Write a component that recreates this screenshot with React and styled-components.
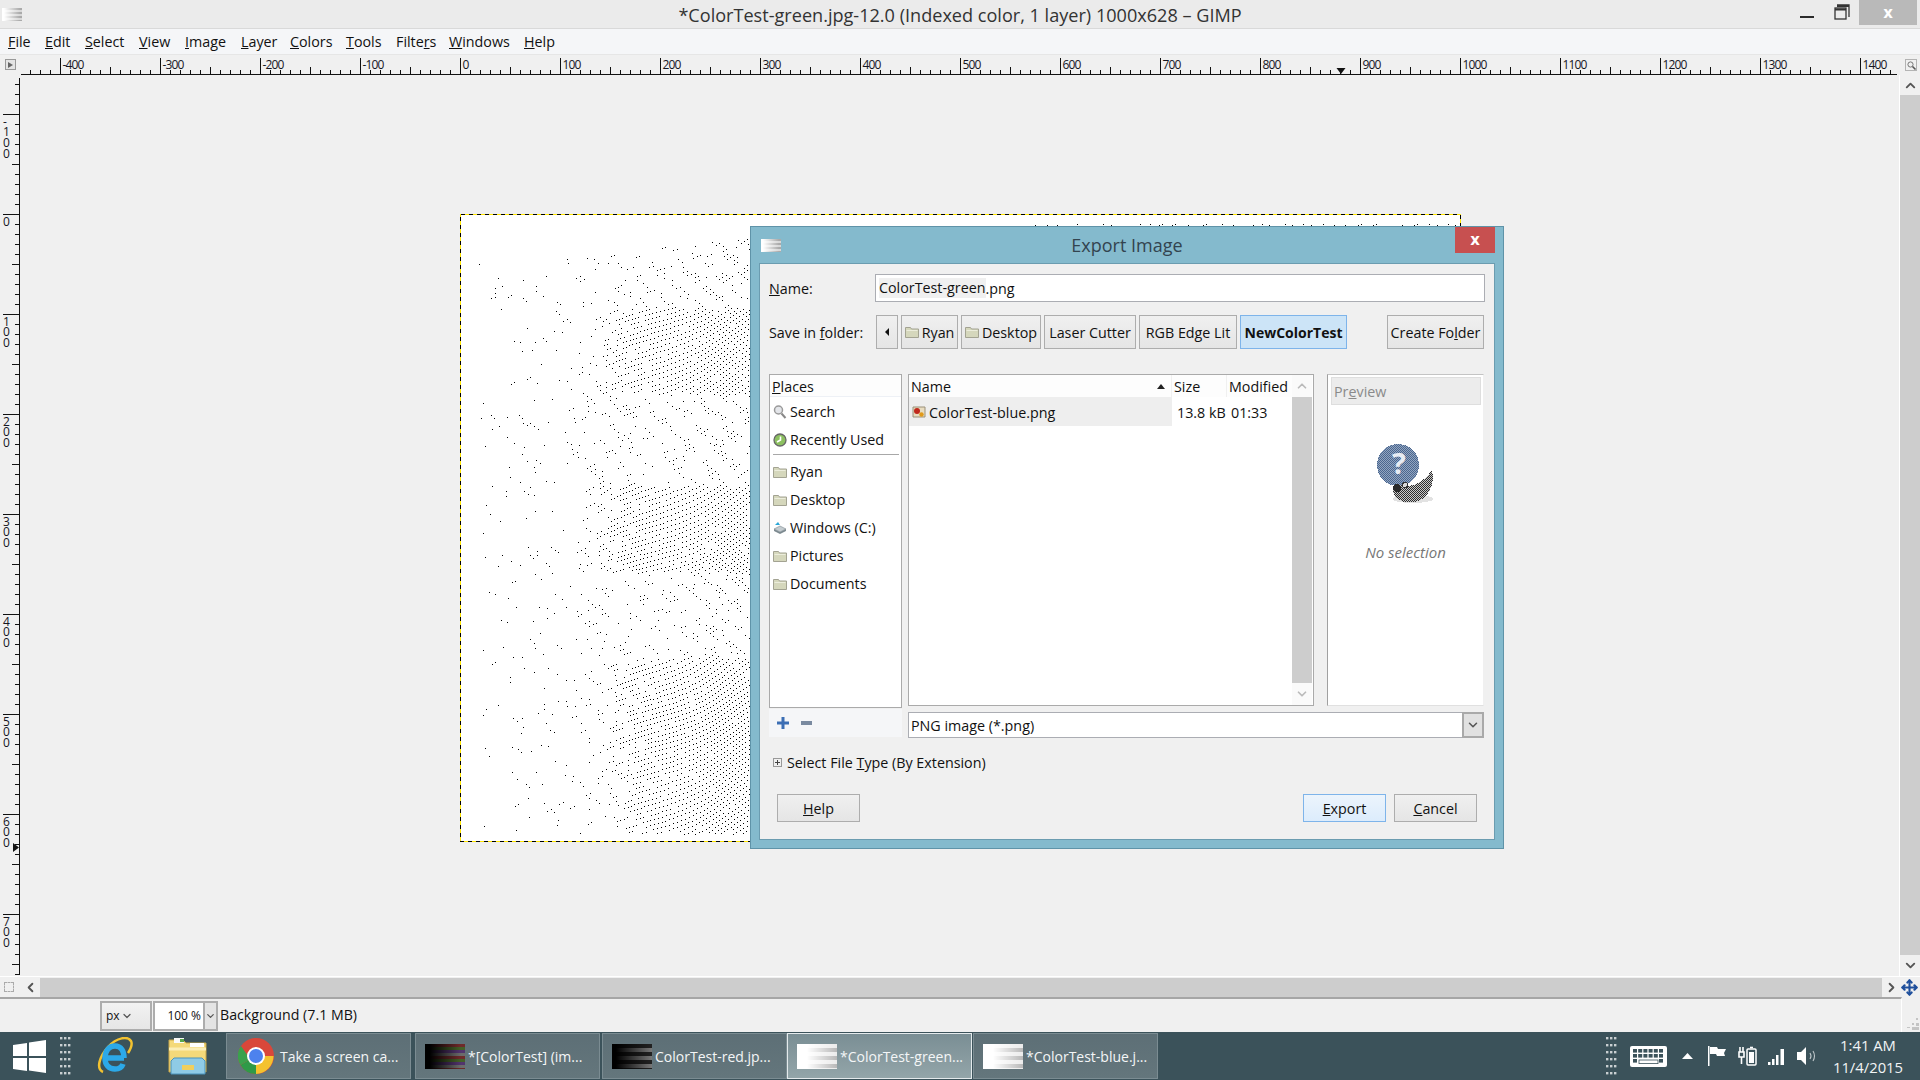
import React, {useMemo} from "react";
import styled, {createGlobalStyle} from "styled-components";
import {ChevronUp, ChevronDown, ChevronLeft, ChevronRight, Move} from "lucide-react";

const uiFont = `"Open Sans", "Noto Sans", sans-serif`;

const GlobalStyle = createGlobalStyle`
  html, body {
    margin: 0;
    padding: 0;
    background: #f0f0f0;
  }
  * {
    box-sizing: border-box;
  }
`;

const Screen = styled.div`
  position: relative;
  width: 1920px;
  height: 1080px;
  overflow: hidden;
  display: flex;
  flex-direction: column;
  font-family: ${uiFont};
  font-size: 14.3px;
  color: #111;
  background: #f0f0f0;
`;

/* window chrome */
const TitleBar = styled.div`
  position: relative;
  flex: none;
  height: 29px;
  display: flex;
  align-items: center;
  justify-content: center;
  background: #ebebeb;
  border-bottom: 1px solid #d9d9d9;
`;

const TitleText = styled.div`
  font-size: 18.1px;
  color: #333;
  padding-top: 1px;
`;

const BlurIcon = styled.div`
  position: absolute;
  left: ${p => p.$left}px;
  top: ${p => p.$top}px;
  width: 20px;
  height: 13px;
  background:
    linear-gradient(90deg, #ffffff 10%, rgba(255,255,255,0) 90%),
    repeating-linear-gradient(180deg, #aaa 0 2px, #d8d8d8 2px 4px);
`;

const WindowControls = styled.div`
  position: absolute;
  right: 3px;
  top: 0;
  display: flex;
  align-items: flex-start;
`;

const MinimizeGlyph = styled.div`
  width: 14px;
  height: 2px;
  margin-top: 16px;
  margin-right: 20px;
  background: #2b2b2b;
`;

const RestoreGlyph = styled.svg`
  width: 16px;
  height: 16px;
  margin-top: 4px;
  margin-right: 9px;
`;

const CloseBox = styled.div`
  width: ${p => p.$w}px;
  height: ${p => p.$h}px;
  background: ${p => p.$bg};
  display: flex;
  align-items: center;
  justify-content: center;
  color: #fff;
  font-family: "DejaVu Sans", sans-serif;
  font-weight: 700;
  font-size: 15px;
`;

const MenuBar = styled.div`
  flex: none;
  height: 26px;
  display: flex;
  align-items: center;
  padding-left: 8px;
  background: #f5f6f8;
  border-bottom: 1px solid #e6e6e6;
`;

const MenuItem = styled.span`
  width: ${p => p.$w}px;
  flex: none;
`;

const RulerRow = styled.div`
  flex: none;
  height: 20px;
  display: flex;
  align-items: flex-start;
`;

const RulerCorner = styled.div`
  width: 21px;
  height: 20px;
  flex: none;
  padding: 4px 0 0 5px;
`;

const SmallSquare = styled.div`
  width: 11px;
  height: 11px;
  border: 1px solid #999;
  background: #e4e4e4;
  display: flex;
  align-items: center;
  justify-content: center;
  &::after {
    content: "";
    border-left: 5px solid #666;
    border-top: 3px solid transparent;
    border-bottom: 3px solid transparent;
  }
`;

const ZoomCorner = styled.svg`
  width: 12px;
  height: 12px;
  margin: 4px 0 0 6px;
  flex: none;
`;

const Middle = styled.div`
  flex: none;
  height: 901px;
  display: flex;
`;

const Canvas = styled.div`
  flex: 1;
  padding: 139px 0 0 439px;
  overflow: hidden;
`;

const ImageFrame = styled.div`
  position: relative;
  width: 1001px;
  height: 628px;
  background: #fff;
`;

const MarchingAnts = styled.svg`
  position: absolute;
  left: 0;
  top: 0;
`;

const VScroll = styled.div`
  width: 21px;
  flex: none;
  display: flex;
  flex-direction: column;
  align-items: center;
  border-left: 1px solid #fff;
  color: #555;
`;

const ArrowCell = styled.div`
  height: ${p => p.$h}px;
  width: ${p => p.$w || 20}px;
  flex: none;
  display: flex;
  align-items: center;
  justify-content: center;
  color: ${p => p.$c || "#555"};
`;

const VThumb = styled.div`
  width: 20px;
  height: 860px;
  flex: none;
  background: #cdcdcd;
`;

const HScrollRow = styled.div`
  flex: none;
  height: 21px;
  display: flex;
  align-items: center;
  border-top: 1px solid #fff;
`;

const DashedSquare = styled.div`
  width: 10px;
  height: 10px;
  margin: 0 6px 0 4px;
  flex: none;
  border: 1px dashed #aaa;
`;

const HThumb = styled.div`
  width: 1842px;
  height: 19px;
  flex: none;
  margin-left: 0;
  background: #cdcdcd;
`;

/* status bar */
const StatusBar = styled.div`
  flex: none;
  height: 35px;
  display: flex;
  align-items: center;
  padding-left: 100px;
  border-top: 2px solid #a6a6a6;
  width: 1902px;
  border-right: 1px solid #fff;
  box-sizing: border-box;
`;

const UnitCombo = styled.div`
  width: 52px;
  height: 30px;
  flex: none;
  display: flex;
  align-items: center;
  padding-left: 4px;
  gap: 1px;
  font-size: 12px;
  border: 2px solid #adadad;
  background: linear-gradient(#f2f2f2, #e6e6e6);
`;

const ZoomInput = styled.div`
  width: 50px;
  height: 30px;
  flex: none;
  margin-left: 1px;
  padding-right: 2px;
  display: flex;
  align-items: center;
  justify-content: flex-end;
  font-size: 12px;
  background: #fff;
  border: 2px solid #adadad;
  border-right: none;
`;

const ZoomDrop = styled.div`
  width: 15px;
  height: 30px;
  flex: none;
  display: flex;
  align-items: center;
  justify-content: center;
  background: #e4e4e4;
  border: 2px solid #adadad;
`;

const StatusText = styled.span`
  margin: -2px 0 0 2px;
  font-size: 14.2px;
`;

const ResizeGrip = styled.svg`
  position: absolute;
  right: 0;
  top: 1018px;
`;

/* taskbar */
const Taskbar = styled.div`
  flex: none;
  height: 48px;
  display: flex;
  align-items: center;
  background: #3b525a;
`;

const BarIcon = styled.svg`
  flex: none;
  margin-left: ${p => p.$ml}px;
`;

const TaskButton = styled.div`
  flex: none;
  width: ${p => p.$w || 185}px;
  height: 46px;
  margin-left: ${p => p.$ml}px;
  display: flex;
  align-items: center;
  color: #f4f6f7;
  font-size: 14px;
  white-space: nowrap;
  border: 1px solid ${p => p.$active ? "#e4eaec" : "#7b8c92"};
  background: ${p => p.$active
    ? "linear-gradient(180deg, #7a8e94, #93a5a9)"
    : "linear-gradient(180deg, #5d6f76, #64767c)"};
`;

const Thumb = styled.div`
  width: 40px;
  height: 25px;
  flex: none;
  margin: 0 3px 0 9px;
  background: ${p => p.$kind === "dark"
    ? "linear-gradient(90deg, #000 0 12%, rgba(0,0,0,.1) 90%), repeating-linear-gradient(180deg, #7b2f2f 0 3px, #4c6b2c 3px 6px, #5b3a7a 6px 9px, #777 9px 12px)"
    : p.$kind === "grey"
      ? "linear-gradient(90deg, #000 0 10%, rgba(0,0,0,0) 100%), repeating-linear-gradient(180deg, #222 0 4px, #777 4px 8px)"
      : "linear-gradient(90deg, #fff 0 25%, rgba(255,255,255,.1) 100%), repeating-linear-gradient(180deg, #e9e9e9 0 4px, #b0b0b0 4px 8px)"};
`;

const Tray = styled.div`
  margin-left: auto;
  display: flex;
  align-items: center;
`;

const Clock = styled.div`
  width: 76px;
  margin: 0 14px 0 13px;
  text-align: center;
  color: #f2f5f6;
  font-size: 14.8px;
  line-height: 22px;
  white-space: nowrap;
`;

/* export dialog */
const Dialog = styled.div`
  position: absolute;
  left: 750px;
  top: 226px;
  width: 754px;
  height: 623px;
  display: flex;
  flex-direction: column;
  background: #84bacd;
  border: 1px solid #5f93a8;
`;

const DialogTitle = styled.div`
  position: relative;
  flex: none;
  height: 36px;
  display: flex;
  align-items: center;
  justify-content: center;
  font-size: 18px;
  color: #33444f;
`;

const DialogClose = styled.div`
  position: absolute;
  right: 8px;
  top: 0;
`;

const DialogBody = styled.div`
  flex: 1;
  margin: 0 8px 8px 8px;
  padding: 10px 10px 0 9px;
  display: flex;
  flex-direction: column;
  background: #f0f0f0;
  border: 1px solid #6b9cb0;
`;

const FormRow = styled.div`
  display: flex;
  align-items: center;
  flex: none;
  height: ${p => p.$h}px;
  margin-top: ${p => p.$mt || 0}px;
`;

const FieldLabel = styled.span`
  width: 106px;
  flex: none;
`;

const NameInput = styled.div`
  flex: 1;
  height: 28px;
  margin-right: -1px;
  display: flex;
  align-items: center;
  padding-left: 3px;
  background: #fff;
  border: 1px solid #abadb3;
`;

const Selected = styled.span`
  background: #f0f0f0;
  line-height: 20px;
`;

const PathButton = styled.div`
  height: 34px;
  flex: none;
  width: ${p => p.$w}px;
  margin-left: ${p => p.$ml || 0}px;
  display: flex;
  align-items: center;
  justify-content: center;
  gap: 3px;
  white-space: nowrap;
  font-size: ${p => p.$on ? 14 : 14.3}px;
  font-weight: ${p => p.$on ? 700 : 400};
  border: 1px solid ${p => p.$on ? "#7eb4ea" : "#adadad"};
  background: ${p => p.$on ? "#cce4f7" : "linear-gradient(#f0f0f0, #e5e5e5)"};
`;

const BackArrow = styled.div`
  border-right: 4px solid #111;
  border-top: 4px solid transparent;
  border-bottom: 4px solid transparent;
`;

const Panels = styled.div`
  flex: none;
  margin-top: 25px;
  height: 364px;
  display: flex;
`;

const Column = styled.div`
  display: flex;
  flex-direction: column;
  flex: none;
  width: ${p => p.$w}px;
  margin-left: ${p => p.$ml || 0}px;
`;

const PlacesBox = styled.div`
  flex: none;
  height: 334px;
  background: #fff;
  border: 1px solid #aaa;
`;

const ListHeader = styled.div`
  height: 22px;
  display: flex;
  align-items: center;
  padding: 1px 0 0 2px;
  background: #fdfdfd;
  border-bottom: 1px solid #eef1f6;
`;

const PlaceRow = styled.div`
  height: 28px;
  display: flex;
  align-items: center;
  padding: 1px 0 0 3px;
  gap: 3px;
`;

const PlaceSeparator = styled.div`
  height: 1px;
  margin: 1px 2px 2px 3px;
  background: #a8a8a8;
`;

const PlaceTools = styled.div`
  flex: none;
  height: 28px;
  margin-top: 1px;
  display: flex;
  align-items: center;
  padding-left: 8px;
  gap: 12px;
  background: #f5f6f8;
`;

const FilesBox = styled.div`
  flex: none;
  height: 332px;
  display: flex;
  background: #fff;
  border: 1px solid #aaa;
`;

const FileList = styled.div`
  flex: 1;
  min-width: 0;
`;

const FileHeader = styled.div`
  height: 22px;
  display: grid;
  grid-template-columns: 263px 55px 1fr;
  align-items: center;
  background: #fdfdfd;
`;

const HeaderCell = styled.div`
  position: relative;
  padding: 1px 0 0 2px;
  height: 100%;
  display: flex;
  align-items: center;
  justify-content: space-between;
  border-right: ${p => p.$last ? "none" : "1px solid #f0f0f0"};
`;

const SortArrow = styled.div`
  margin-right: 6px;
  border-bottom: 5px solid #222;
  border-left: 4px solid transparent;
  border-right: 4px solid transparent;
`;

const FileRow = styled.div`
  height: 29px;
  padding-top: 0;
  display: grid;
  grid-template-columns: 263px 54px 1fr;
  align-items: center;
`;

const FileNameCell = styled.div`
  height: 100%;
  display: flex;
  align-items: center;
  gap: 3px;
  padding: 1px 0 0 3px;
  background: #eeeeee;
`;

const FileCell = styled.div`
  padding: 1px 0 0 ${p => p.$pad}px;
  white-space: nowrap;
`;

const ListScroll = styled.div`
  width: 20px;
  flex: none;
  display: flex;
  flex-direction: column;
  margin-right: 1px;
  background: #fafafa;
`;

const ListThumb = styled.div`
  flex: none;
  height: 286px;
  background: #cdcdcd;
`;

const FilterCombo = styled.div`
  flex: none;
  height: 26px;
  margin-top: 6px;
  width: 576px;
  display: flex;
  align-items: center;
  padding-left: 2px;
  background: #fff;
  border: 1px solid #abadb3;
`;

const FilterDrop = styled.div`
  margin-left: auto;
  width: 22px;
  height: 26px;
  flex: none;
  display: flex;
  align-items: center;
  justify-content: center;
  background: #e1e1e1;
  border: 2px solid #a9a9a9;
  margin-right: -1px;
`;

const PreviewBox = styled.div`
  height: 332px;
  display: flex;
  flex-direction: column;
  align-items: center;
  background: #fff;
  border-left: 1px solid #a0a0a0;
  border-top: 1px solid #c4c4c4;
  border-right: 1px solid #f0f0f0;
  border-bottom: 1px solid #e0e0e0;
`;

const PreviewHeader = styled.div`
  align-self: stretch;
  flex: none;
  height: 28px;
  margin: 2px 2px 0 3px;
  padding-left: 2px;
  display: flex;
  align-items: center;
  color: #8a8a8a;
  background: #ececec;
  border: 1px solid #dedede;
`;

const NoPreviewSvg = styled.svg`
  flex: none;
  margin: 39px 0 0 3px;
`;

const NoSelection = styled.div`
  margin-top: 38px;
  color: #777;
  font-style: italic;
  font-size: 15px;
`;

const ExpanderRow = styled.div`
  flex: none;
  display: flex;
  align-items: center;
  gap: 5px;
  height: 24px;
  margin: 12px 0 0 4px;
`;

const Expander = styled.div`
  width: 9px;
  height: 9px;
  border: 1px solid #999;
  position: relative;
  &::before {
    content: "";
    position: absolute;
    left: 1px;
    right: 1px;
    top: 3px;
    height: 1px;
    background: #444;
  }
  &::after {
    content: "";
    position: absolute;
    top: 1px;
    bottom: 1px;
    left: 3px;
    width: 1px;
    background: #444;
  }
`;

const ActionRow = styled.div`
  flex: none;
  display: flex;
  margin: 20px 7px 0 8px;
`;

const ActionButton = styled.div`
  width: 83px;
  height: 28px;
  display: flex;
  align-items: center;
  justify-content: center;
  flex: none;
  margin-left: ${p => p.$ml || 0}px;
  border: 1px solid ${p => p.$primary ? "#7eb4ea" : "#adadad"};
  background: ${p => p.$primary
    ? "linear-gradient(#ecf4fc, #dcecfc)"
    : "linear-gradient(#f0f0f0, #e5e5e5)"};
`;

const menu = [
    [<><u>F</u>ile</>, 37],
    [<><u>E</u>dit</>, 40],
    [<><u>S</u>elect</>, 54],
    [<><u>V</u>iew</>, 46],
    [<><u>I</u>mage</>, 56],
    [<><u>L</u>ayer</>, 49],
    [<><u>C</u>olors</>, 56],
    [<><u>T</u>ools</>, 50],
    [<>Filte<u>r</u>s</>, 53],
    [<><u>W</u>indows</>, 75],
    [<><u>H</u>elp</>, 40],
];

const hTicks = [];
for (let v = -440; v <= 1430; v += 10) hTicks.push(v);
const vTicks = [];
for (let v = -130; v <= 760; v += 10) vTicks.push(v);

const HRuler = () => (
    <svg width="1878" height="20" style={{display: "block", flex: "none"}}>
        <path d="M0 19.5H1876" stroke="#111" fill="none"/>
        {hTicks.map(v => {
            const x = 439.5 + v;
            const len = v % 100 === 0 ? 16 : v % 50 === 0 ? 7 : 4;
            return <path key={v} d={`M${x} 19V${19 - len}`} stroke="#111" fill="none"/>;
        })}
        {hTicks.filter(v => v % 100 === 0).map(v => (
            <text key={v} x={441.5 + v} y="13.5" fontFamily="Open Sans" fontSize="12" letterSpacing="-0.9" fill="#16161f">{v}</text>
        ))}
        <path d="M1315.5 13h9l-4.5 6z" fill="#111"/>
    </svg>
);

const VRuler = () => (
    <svg width="21" height="901" style={{display: "block", flex: "none"}}>
        <path d="M19.5 3V900" stroke="#111" fill="none"/>
        {vTicks.map(v => {
            const y = 139.5 + v;
            const len = v % 100 === 0 ? 16 : v % 50 === 0 ? 7 : 4;
            return <path key={v} d={`M19 ${y}H${19 - len}`} stroke="#111" fill="none"/>;
        })}
        {[-100, 0, 100, 200, 300, 400, 500, 600, 700].map(v => {
            const chars = String(v).split("");
            return (
                <text key={v} x={chars.map(() => 3).join(" ")}
                      y={chars.map((c, i) => 139.5 + v + 11 + i * 10.7).join(" ")}
                      fontFamily="Open Sans" fontSize="12" fill="#16161f">{v}</text>
            );
        })}
        <path d="M13 768v9l6-4.5z" fill="#111"/>
    </svg>
);

const interp = (pts, x) => {
    for (let i = 1; i < pts.length; i++) {
        if (x <= pts[i][0]) {
            const [x0, y0] = pts[i - 1];
            const [x1, y1] = pts[i];
            return y0 + (y1 - y0) * (x - x0) / (x1 - x0);
        }
    }
    return pts[pts.length - 1][1];
};

const smooth = (a, b, x) => {
    const t = Math.min(1, Math.max(0, (x - a) / (b - a)));
    return t * t * (3 - 2 * t);
};

// halftone picture: a warped lattice thinned out by a density map
const makeDots = () => {
    let seed = 1234;
    const rand = () => {
        seed = (seed * 16807) % 2147483647;
        return seed / 2147483647;
    };
    const top = [[0, 50], [50, 47], [147, 41], [210, 30], [280, 24], [595, 9], [1000, 8]];
    const bands = [[93, 179, 175], [270, 356, 165], [443, 618, 185]];
    let d = "";
    for (let i = -200; i < 300; i++) {
        for (let j = -300; j < 300; j++) {
            let x = i * 3.6 + j * 3.4;
            let y = i * 3.4 - j * 1.6;
            const wx = x, wy = y;
            x += 5 * Math.sin(wy / 37) + 2 * Math.sin(wx / 17);
            y += 5 * Math.sin(wx / 29) + 2 * Math.sin(wy / 23);
            x = Math.round(x);
            y = Math.round(y);
            if (x < 18 || x > 998 || y < 8 || y > 619) continue;
            if (y < interp(top, x)) continue;
            if (x > 300 && y > 13) continue;
            const t = Math.min(1, (x - 18) / 280);
            // sparse area reads as wavy diagonal chains
            const chain = Math.sin((x - y * 1.05 + 9 * Math.sin(y / 41)) / 4.5) > 0.1 ? 1 : 0.12;
            let p = (0.07 + 0.62 * Math.pow(t, 1.3)) * chain;
            if (x > 300) p = 0.85;
            for (const [y0, y1, x0] of bands) {
                const inside = smooth(y0 - 3, y0 + 3, y) * (1 - smooth(y1 - 3, y1 + 3, y));
                p += 0.85 * inside * smooth(x0 - 55, x0 + 30, x);
            }
            if (rand() < p) d += `M${x + 1} ${y + 1}h1v1h-1z`;
        }
    }
    return d;
};

const Halftone = () => {
    const d = useMemo(makeDots, []);
    return (
        <MarchingAnts width="1001" height="628" shapeRendering="crispEdges">
            <path d={d} fill="#000"/>
            <rect x="0.5" y="0.5" width="1000" height="627" fill="none" stroke="#ffe600"/>
            <rect x="0.5" y="0.5" width="1000" height="627" fill="none" stroke="#000" strokeDasharray="4 4"/>
        </MarchingAnts>
    );
};

const FolderIcon = () => (
    <svg width="14" height="14" viewBox="0 0 14 14" style={{flex: "none"}}>
        <path d="M.5 2.500h5l1 1.500h7v8.500H.5z" fill="#d5d7bc" stroke="#a3a392"/>
        <path d="M1.500 5.500h11" stroke="#eceddc"/>
    </svg>
);

const SearchIcon = () => (
    <svg width="14" height="16" viewBox="0 0 14 16" style={{flex: "none"}}>
        <circle cx="5.500" cy="6" r="4" fill="#e4e6ea" stroke="#9a9a9a" strokeWidth="1.5"/>
        <path d="M8.500 9.500l4 4.500" stroke="#888" strokeWidth="2"/>
    </svg>
);

const RecentIcon = () => (
    <svg width="14" height="16" viewBox="0 0 14 16" style={{flex: "none"}}>
        <circle cx="7" cy="8" r="6" fill="#8cc060" stroke="#666" strokeWidth="1.3"/>
        <path d="M7.500 4.500v3.500L4 10" stroke="#fff" strokeWidth="1.6" fill="none"/>
    </svg>
);

const DriveIcon = () => (
    <svg width="14" height="16" viewBox="0 0 14 16" style={{flex: "none"}}>
        <path d="M2 5l3-3 2 3z" fill="#2aa7d8"/>
        <path d="M1 9l6-3 6 3-6 3z" fill="#c4ccd0" stroke="#7d8a90" strokeWidth=".6"/>
        <path d="M1 9v2l6 3 6-3V9l-6 3z" fill="#7d8a90"/>
    </svg>
);

const PngIcon = () => (
    <svg width="14" height="14" viewBox="0 0 14 14" style={{flex: "none"}}>
        <path d="M1 2h12v10H1z" fill="#e8dcc0" stroke="#9a9078"/>
        <circle cx="5" cy="6" r="3" fill="#c0291c"/>
        <circle cx="9.500" cy="9.500" r="2.200" fill="#e09a1a"/>
    </svg>
);

const NoPreviewIcon = () => (
    <NoPreviewSvg width="60" height="60" viewBox="0 0 60 60" shapeRendering="crispEdges">
        <defs>
            <pattern id="dither" width="2" height="2" patternUnits="userSpaceOnUse">
                <rect width="2" height="2" fill="#4a668f"/>
                <rect width="1" height="1" fill="#93a6c0"/>
                <rect x="1" y="1" width="1" height="1" fill="#93a6c0"/>
            </pattern>
            <pattern id="dither2" width="2" height="2" patternUnits="userSpaceOnUse">
                <rect width="2" height="2" fill="#2c2c2c"/>
                <rect width="1" height="1" fill="#c8c8c8"/>
                <rect x="1" y="1" width="1" height="1" fill="#c8c8c8"/>
            </pattern>
        </defs>
        <ellipse cx="36" cy="55" rx="20" ry="4" fill="#e2e2e2"/>
        <circle cx="21" cy="21" r="21" fill="url(#dither)"/>
        <text x="22" y="30" textAnchor="middle" fontFamily="Open Sans" fontWeight="700" fontSize="29" fill="#e8edf4">?</text>
        <path d="M55 26C58 40 52 55 38 58C28 60 18 56 16 48C16 42 22 40 28 42C36 43 48 38 55 26z" fill="url(#dither2)"/>
        <circle cx="20" cy="44" r="4" fill="#2a2a2a"/>
        <circle cx="28" cy="41" r="2.500" fill="#d8d8d8" stroke="#333"/>
    </NoPreviewSvg>
);

const Gripper = ({ml}) => (
    <BarIcon $ml={ml} width="11" height="38" viewBox="0 0 11 38" fill="#c9cfd1">
        {[0, 7, 14, 21, 28, 35].map(y => [0, 4, 8].map(x => (
            <rect key={x + "-" + y} x={x} y={y} width="2.4" height="2.4"/>
        )))}
    </BarIcon>
);

const WinLogo = ({ml}) => (
    <BarIcon $ml={ml} width="33" height="33" viewBox="0 0 33 33" fill="#fff">
        <path d="M0 5l14-2v13H0zM16 2.600L33 0v16H16zM0 18h14v13L0 29zM16 18h17v15l-17-2.600z"/>
    </BarIcon>
);

const IeLogo = ({ml}) => (
    <BarIcon $ml={ml} width="38" height="38" viewBox="0 0 38 38" fill="none">
        <path d="M8 35C1 32 4 20 13 10S33 -1 36 4c2 4-1 9-3 12" stroke="#f2c230" strokeWidth="2.5"/>
        <path d="M29 21H10M10 21c0-7 4-12 10-12s9 5 9 12M10 21c0 7 4 11 10 11 4 0 7-2 8-5" stroke="#2ca9e8" strokeWidth="5.5"/>
    </BarIcon>
);

const ExplorerLogo = ({ml}) => (
    <BarIcon $ml={ml} width="40" height="38" viewBox="0 0 40 38">
        <path d="M1 3h14l3 3h20v29H1z" fill="#f4d97a" stroke="#c9a84a"/>
        <path d="M6 1h10v5H6z" fill="#f9f9f9"/>
        <path d="M12 2h4v3h-4z" fill="#5ba84a"/>
        <path d="M22 6h14v4H22z" fill="#fff"/>
        <path d="M1 12h37" stroke="#fbeeb6" strokeWidth="3"/>
        <path d="M6 21h28l3 3v13H3V24z" fill="#8fcbe6" stroke="#4b93bc"/>
        <path d="M14 28h12v5H14z" fill="#f0cf5e"/>
    </BarIcon>
);

const ChromeLogo = () => (
    <svg width="36" height="36" viewBox="0 0 36 36" style={{flex: "none", margin: "0 6px 0 11px"}}>
        <circle cx="18" cy="18" r="18" fill="#d9473a"/>
        <path d="M18 18L2.400 27A18 18 0 0 0 18 36l8-3z" fill="#2f9a48"/>
        <path d="M18 18h17.600A18 18 0 0 1 18 36z" fill="#f4c22f"/>
        <path d="M18 18L2.400 27A18 18 0 0 1 3 8l7 10z" fill="#3aa14d"/>
        <circle cx="18" cy="18" r="9" fill="#fff"/>
        <circle cx="18" cy="18" r="7" fill="#4d82ee"/>
    </svg>
);

const App = () => (
    <Screen>
        <GlobalStyle/>
        <TitleBar>
            <BlurIcon $left={2} $top={8}/>
            <TitleText>*ColorTest-green.jpg-12.0 (Indexed color, 1 layer) 1000x628 – GIMP</TitleText>
            <WindowControls>
                <MinimizeGlyph/>
                <RestoreGlyph viewBox="0 0 16 16" fill="none" stroke="#333" strokeWidth="1.3">
                    <path d="M3 1h12v12"/>
                    <rect x="1" y="4" width="11" height="11"/>
                    <path d="M1 5.500h11M3 2h12" strokeWidth="2"/>
                </RestoreGlyph>
                <CloseBox $w={58} $h={25} $bg="#b9b9b9">x</CloseBox>
            </WindowControls>
        </TitleBar>
        <MenuBar>
            {menu.map(([label, w], i) => <MenuItem key={i} $w={w}>{label}</MenuItem>)}
        </MenuBar>
        <RulerRow>
            <RulerCorner><SmallSquare/></RulerCorner>
            <HRuler/>
            <ZoomCorner viewBox="0 0 12 12" fill="none">
                <rect x=".5" y=".5" width="11" height="11" stroke="#777" strokeDasharray="1 1"/>
                <circle cx="5.500" cy="5.500" r="2.600" stroke="#777"/>
                <path d="M7.500 7.500l3 3" stroke="#555" strokeWidth="1.6"/>
            </ZoomCorner>
        </RulerRow>
        <Middle>
            <VRuler/>
            <Canvas>
                <ImageFrame>
                    <Halftone/>
                </ImageFrame>
            </Canvas>
            <VScroll>
                <ArrowCell $h={20}><ChevronUp size={15} strokeWidth={3}/></ArrowCell>
                <VThumb/>
                <ArrowCell $h={20}><ChevronDown size={15} strokeWidth={3}/></ArrowCell>
            </VScroll>
        </Middle>
        <HScrollRow>
            <DashedSquare/>
            <ArrowCell $h={19} $w={20}><ChevronLeft size={15} strokeWidth={3}/></ArrowCell>
            <HThumb/>
            <ArrowCell $h={19} $w={18}><ChevronRight size={15} strokeWidth={3}/></ArrowCell>
            <ArrowCell $h={19} $w={19} $c="#1f4f9c"><Move size={17} strokeWidth={3}/></ArrowCell>
        </HScrollRow>
        <StatusBar>
            <UnitCombo>px <ChevronDown size={12} strokeWidth={2.4} color="#555"/></UnitCombo>
            <ZoomInput>100 %</ZoomInput>
            <ZoomDrop><ChevronDown size={12} strokeWidth={2.6} color="#555"/></ZoomDrop>
            <StatusText>Background (7.1 MB)</StatusText>
        </StatusBar>
        <ResizeGrip width="14" height="12" viewBox="0 0 14 12" fill="#c4c4c4">
            <path d="M10 0h2v2h-2zM6 5h2v2H6zM10 5h3v3h-3zM1 9h3v1H1zM6 9h7v3H6z"/>
        </ResizeGrip>
        <Taskbar>
            <WinLogo ml={13}/>
            <Gripper ml={14}/>
            <IeLogo ml={24}/>
            <ExplorerLogo ml={35}/>
            <TaskButton $ml={18} $w={185}>
                <ChromeLogo/>Take a screen ca...
            </TaskButton>
            <TaskButton $ml={4}><Thumb $kind="dark"/>*[ColorTest] (im...</TaskButton>
            <TaskButton $ml={2}><Thumb $kind="grey"/>ColorTest-red.jp...</TaskButton>
            <TaskButton $ml={0} $active><Thumb/>*ColorTest-green...</TaskButton>
            <TaskButton $ml={1}><Thumb/>*ColorTest-blue.j...</TaskButton>
            <Tray>
                <Gripper ml={0}/>
                <BarIcon $ml={12} width="39" height="23" viewBox="0 0 39 23">
                    <rect x="1" y="1" width="37" height="21" rx="2" fill="#fff"/>
                    <g fill="#3b525a">
                        {[0, 1, 2].map(r => [0, 1, 2, 3, 4, 5].map(c => (
                            r === 2 && c > 0 && c < 5 ? null :
                            <rect key={r + "-" + c} x={4 + c * 5.2} y={4 + r * 5} width="4" height="3.6"/>
                        )))}
                    </g>
                    <rect x="10" y="15" width="19" height="3.6" fill="#fff" stroke="#3b525a" strokeWidth=".8"/>
                </BarIcon>
                <BarIcon $ml={14} width="11" height="6" viewBox="0 0 11 6" fill="#fff"><path d="M5.500 0L11 6H0z"/></BarIcon>
                <BarIcon $ml={15} width="18" height="20" viewBox="0 0 18 20" fill="#fff">
                    <path d="M0 0h1.500v20H0zM2 1h7l1 2h8l-2 4 1 3H9L8 8H2z"/>
                </BarIcon>
                <BarIcon $ml={12} width="19" height="20" viewBox="0 0 19 20" fill="none" stroke="#fff">
                    <path d="M1 6h5v5H1zM3.500 11v7M2 1v5M5 1v5" strokeWidth="1.6"/>
                    <rect x="9" y="3" width="9" height="16" rx="1" strokeWidth="1.5"/>
                    <rect x="11" y="6" width="5" height="11" fill="#fff" stroke="none"/>
                    <path d="M12 1.500h3" strokeWidth="1.6"/>
                </BarIcon>
                <BarIcon $ml={11} width="16" height="17" viewBox="0 0 16 17" fill="#fff">
                    <path d="M0 14h2.500v3H0zM4 11h2.500v6H4zM8 7h2.500v10H8zM12.500 1H16v16h-3.500z"/>
                </BarIcon>
                <BarIcon $ml={13} width="20" height="20" viewBox="0 0 20 20" fill="none">
                    <path d="M0 6h4l5-5v18l-5-5H0z" fill="#fff"/>
                    <path d="M13 7q2 3 0 6M16 5q3 5 0 10" stroke="#bfc7ca" strokeWidth="1.1"/>
                </BarIcon>
                <Clock>1:41 AM<br/>11/4/2015</Clock>
            </Tray>
        </Taskbar>

        <Dialog>
            <DialogTitle>
                <BlurIcon $left={10} $top={12}/>
                Export Image
                <DialogClose><CloseBox $w={40} $h={26} $bg="#c75050">x</CloseBox></DialogClose>
            </DialogTitle>
            <DialogBody>
                <FormRow $h={28}>
                    <FieldLabel><u>N</u>ame:</FieldLabel>
                    <NameInput><Selected>ColorTest-green</Selected>.png</NameInput>
                </FormRow>
                <FormRow $h={34} $mt={13}>
                    <FieldLabel>Save in <u>f</u>older:</FieldLabel>
                    <PathButton $w={22} $ml={1}><BackArrow/></PathButton>
                    <PathButton $w={57} $ml={3}><FolderIcon/>Ryan</PathButton>
                    <PathButton $w={80} $ml={3}><FolderIcon/>Desktop</PathButton>
                    <PathButton $w={92} $ml={3}>Laser Cutter</PathButton>
                    <PathButton $w={98} $ml={3}>RGB Edge Lit</PathButton>
                    <PathButton $w={107} $ml={3} $on>NewColorTest</PathButton>
                    <PathButton $w={97} $ml={40}><span>Create Fo<u>l</u>der</span></PathButton>
                </FormRow>
                <Panels>
                    <Column $w={133}>
                        <PlacesBox>
                            <ListHeader><span><u>P</u>laces</span></ListHeader>
                            <PlaceRow><SearchIcon/>Search</PlaceRow>
                            <PlaceRow><RecentIcon/>Recently Used</PlaceRow>
                            <PlaceSeparator/>
                            <PlaceRow><FolderIcon/>Ryan</PlaceRow>
                            <PlaceRow><FolderIcon/>Desktop</PlaceRow>
                            <PlaceRow><DriveIcon/>Windows (C:)</PlaceRow>
                            <PlaceRow><FolderIcon/>Pictures</PlaceRow>
                            <PlaceRow><FolderIcon/>Documents</PlaceRow>
                        </PlacesBox>
                        <PlaceTools>
                            <svg width="12" height="12" viewBox="0 0 12 12" fill="#3c6eb4"><path d="M4.500 0h3v4.500H12v3H7.500V12h-3V7.500H0v-3h4.500z"/></svg>
                            <svg width="11" height="4" viewBox="0 0 11 4" fill="#7a8aa0"><path d="M0 0h11v4H0z"/></svg>
                        </PlaceTools>
                    </Column>
                    <Column $w={406} $ml={6}>
                        <FilesBox>
                            <FileList>
                                <FileHeader>
                                    <HeaderCell>Name<SortArrow/></HeaderCell>
                                    <HeaderCell>Size</HeaderCell>
                                    <HeaderCell $last>Modified</HeaderCell>
                                </FileHeader>
                                <FileRow>
                                    <FileNameCell><PngIcon/>ColorTest-blue.png</FileNameCell>
                                    <FileCell $pad={5}>13.8 kB</FileCell>
                                    <FileCell $pad={5}>01:33</FileCell>
                                </FileRow>
                            </FileList>
                            <ListScroll>
                                <ArrowCell $h={22} $c="#bbb"><ChevronUp size={14} strokeWidth={3}/></ArrowCell>
                                <ListThumb/>
                                <ArrowCell $h={22} $c="#bbb"><ChevronDown size={14} strokeWidth={3}/></ArrowCell>
                            </ListScroll>
                        </FilesBox>
                        <FilterCombo>
                            PNG image (*.png)
                            <FilterDrop><ChevronDown size={14} strokeWidth={2.6} color="#555"/></FilterDrop>
                        </FilterCombo>
                    </Column>
                    <Column $w={157} $ml={13}>
                        <PreviewBox>
                            <PreviewHeader><span>Pr<u>e</u>view</span></PreviewHeader>
                            <NoPreviewIcon/>
                            <NoSelection>No selection</NoSelection>
                        </PreviewBox>
                    </Column>
                </Panels>
                <ExpanderRow>
                    <Expander/>
                    <span>Select File <u>T</u>ype (By Extension)</span>
                </ExpanderRow>
                <ActionRow>
                    <ActionButton><span><u>H</u>elp</span></ActionButton>
                    <ActionButton $ml={443} $primary><span><u>E</u>xport</span></ActionButton>
                    <ActionButton $ml={8}><span><u>C</u>ancel</span></ActionButton>
                </ActionRow>
            </DialogBody>
        </Dialog>
    </Screen>
);

export default App;
